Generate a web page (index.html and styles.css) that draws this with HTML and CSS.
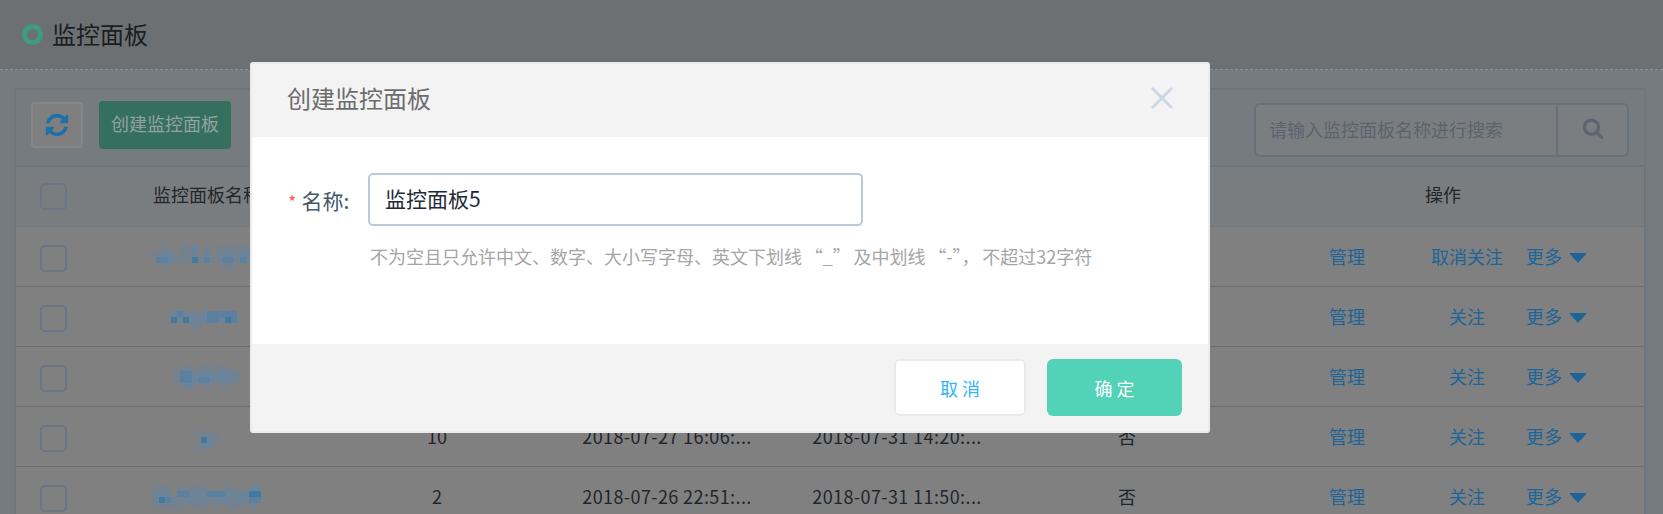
FILE: index.html
```html
<!DOCTYPE html>
<html lang="zh-CN">
<head>
<meta charset="utf-8">
<title>监控面板</title>
<link rel="stylesheet" href="styles.css">
</head>
<body>
<div class="page">
  <header class="topbar">
    <span class="ring"></span>
    <h1 class="page-title">监控面板</h1>
  </header>
  <main class="content">
    <section class="panel">
      <div class="toolbar">
        <button class="refresh" type="button" aria-label="刷新">
          <svg width="26" height="26" viewBox="0 0 1792 1792"><path class="rf" d="M1639 1056q0 5-1 7-64 268-268 434.500t-478 166.500q-146 0-282.500-55t-243.500-157l-129 129q-19 19-45 19t-45-19-19-45v-448q0-26 19-45t45-19h448q26 0 45 19t19 45-19 45l-137 137q71 66 161 102t187 36q134 0 250-65t186-179q11-17 53-117 8-23 30-23h192q13 0 22.500 9.500t9.500 22.500zm25-800v448q0 26-19 45t-45 19h-448q-26 0-45-19t-19-45 19-45l138-138q-148-137-349-137-134 0-250 65t-186 179q-11 17-53 117-8 23-30 23h-199q-13 0-22.500-9.500t-9.500-22.500v-7q65-268 270-434.500t480-166.500q146 0 284 55.500t245 156.500l130-129q19-19 45-19t45 19 19 45z"/></svg>
        </button>
        <button class="create" type="button">创建监控面板</button>
        <div class="search">
          <span class="search-text">请输入监控面板名称进行搜索</span>
          <span class="search-btn">
            <svg width="22" height="22" viewBox="0 0 1792 1792"><path class="sr" d="M1216 832q0-185-131.500-316.500t-316.500-131.500-316.500 131.500-131.500 316.500 131.500 316.500 316.500 131.500 316.500-131.500 131.500-316.500zm512 832q0 52-38 90t-90 38q-54 0-90-38l-343-342q-179 124-399 124-143 0-273.500-55.500t-225-150-150-225-55.500-273.500 55.500-273.500 150-225 225-150 273.500-55.500 273.500 55.500 225 150 150 225 55.500 273.500q0 220-124 399l343 343q37 37 37 90z"/></svg>
          </span>
        </div>
      </div>
      <table class="grid">
        <colgroup><col class="c-check"><col class="c-mid"><col class="c-mid"><col class="c-mid"><col class="c-mid"><col class="c-mid"><col class="c-ops"></colgroup>
        <thead>
          <tr><th><span class="box"></span></th><th>监控面板名称</th><th></th><th></th><th></th><th></th><th>操作</th></tr>
        </thead>
        <tbody>
          <tr>
            <td><span class="box"></span></td>
            <td><svg class="mosaic" width="114" height="24" viewBox="0 0 19 4"><path class="m0" d="M2 0h1v1H2zM5 0h2v2H5zM9 0h1v1H9zM11 0h8v1h-8zM0 1h2v1H0zM11 1h1v1h-1zM14 1h1v1h-1zM18 1h1v2h-1zM4 2h3v1H4zM8 2h1v1H8zM10 2h2v1h-2zM14 2h1v1h-1zM2 3h1v1H2zM12 3h2v1h-2z"/><path class="m1" d="M2 1h2v1H2zM7 0h1v2H7zM9 1h1v1H9zM12 1h2v1h-2zM15 1h3v1h-3zM3 2h1v1H3zM16 2h2v1h-2z"/><path class="m2" d="M1 2h2v1H1zM9 2h1v1H9zM12 2h2v1h-2zM15 2h1v1h-1z"/><path class="m3" d="M7 2h1v1H7z"/></svg></td>
            <td></td><td></td><td></td><td></td>
            <td><div class="ops"><a class="op-main">管理</a><a class="op-follow">取消关注</a><a class="op-more">更多<i class="tri"></i></a></div></td>
          </tr>
          <tr>
            <td><span class="box"></span></td>
            <td><svg class="mosaic" width="72" height="24" viewBox="0 0 12 4"><path class="m0" d="M4 1h1v1H4zM11 2h1v1h-1zM3 3h2v1H3z"/><path class="m1" d="M0 1h1v1H0zM2 1h2v1H2zM5 1h1v1H5zM1 2h1v1H1zM3 2h3v1H3zM8 2h1v1H8z"/><path class="m2" d="M1 1h1v1H1zM6 1h4v1H6zM6 2h2v1H6zM10 2h1v1h-1zM10 1h1v1h-1z"/><path class="m3" d="M0 2h1v1H0zM2 2h1v1H2zM9 2h1v1H9z"/></svg></td>
            <td></td><td></td><td></td><td></td>
            <td><div class="ops"><a class="op-main">管理</a><a class="op-follow">关注</a><a class="op-more">更多<i class="tri"></i></a></div></td>
          </tr>
          <tr>
            <td><span class="box"></span></td>
            <td><svg class="mosaic" width="66" height="24" viewBox="0 0 11 4"><path class="m0" d="M1 0h2v1H1zM4 0h2v1H4zM7 0h2v1H7zM0 1h1v2H0zM10 1h1v2h-1zM1 3h1v1H1zM3 3h1v1H3zM5 3h1v1H5zM8 3h1v1H8z"/><path class="m1" d="M3 1h7v1H3zM3 2h1v1H3zM6 2h4v1H6zM2 3h1v1H2z"/><path class="m2" d="M1 1h2v1H1zM1 2h2v1H1zM4 2h2v1H4z"/></svg></td>
            <td></td><td></td><td></td><td></td>
            <td><div class="ops"><a class="op-main">管理</a><a class="op-follow">关注</a><a class="op-more">更多<i class="tri"></i></a></div></td>
          </tr>
          <tr>
            <td><span class="box"></span></td>
            <td><svg class="mosaic" width="24" height="24" viewBox="0 0 4 4"><path class="m0" d="M0 1h4v1H0zM3 2h1v1H3zM0 3h1v1H0z"/><path class="m1" d="M2 2h1v1H2zM1 3h2v1H1z"/><path class="m3" d="M1 2h1v1H1z"/></svg></td>
            <td>10</td>
            <td class="date">2018-07-27 16:06:...</td>
            <td class="date">2018-07-31 14:20:...</td>
            <td>否</td>
            <td><div class="ops"><a class="op-main">管理</a><a class="op-follow">关注</a><a class="op-more">更多<i class="tri"></i></a></div></td>
          </tr>
          <tr>
            <td><span class="box"></span></td>
            <td><svg class="mosaic" width="108" height="24" viewBox="0 0 18 4"><path class="m0" d="M0 0h3v1H0zM4 0h1v1H4zM6 0h3v1H6zM12 0h2v1h-2zM0 3h5v1H0zM6 3h3v1H6zM10 3h1v1h-1zM12 3h3v1h-3zM16 3h1v1h-1zM4 2h1v1H4zM9 2h1v1H9zM13 2h1v1h-1z"/><path class="m1" d="M16 0h2v1h-2zM0 1h3v1H0zM6 1h3v1H6zM12 1h4v1h-4zM0 2h1v1H0zM3 2h1v1H3zM5 2h4v1H5zM10 2h3v1h-3zM14 2h2v1h-2z"/><path class="m2" d="M4 1h2v1H4zM9 1h3v1H9zM2 2h1v1H2zM16 2h2v1h-2z"/><path class="m3" d="M16 1h2v1h-2zM1 2h1v1H1z"/></svg></td>
            <td>2</td>
            <td class="date">2018-07-26 22:51:...</td>
            <td class="date">2018-07-31 11:50:...</td>
            <td>否</td>
            <td><div class="ops"><a class="op-main">管理</a><a class="op-follow">关注</a><a class="op-more">更多<i class="tri"></i></a></div></td>
          </tr>
        </tbody>
      </table>
    </section>
  </main>
</div>

<div class="modal" role="dialog" aria-label="创建监控面板">
  <div class="modal-head">
    <h2 class="modal-title">创建监控面板</h2>
    <svg class="close" width="24" height="24" viewBox="0 0 24 24"><path d="M2 2l20 20M22 2L2 22" stroke="#cdd8e4" stroke-width="3"/></svg>
  </div>
  <div class="modal-body">
    <div class="field">
      <label class="field-label"><span class="req">*</span>名称:</label>
      <div class="input">监控面板5</div>
    </div>
    <p class="hint">不为空且只允许中文、数字、大小写字母、英文下划线 “_” 及中划线 “-”， 不超过32字符</p>
  </div>
  <div class="modal-foot">
    <button class="btn-cancel" type="button">取消</button>
    <button class="btn-ok" type="button">确定</button>
  </div>
</div>
</body>
</html>
```
FILE: styles.css
```css
* { box-sizing: border-box; }
html, body { margin: 0; height: 100%; overflow: hidden; }
body {
  font-family: "Noto Sans CJK SC", "Noto Sans", sans-serif;
  font-size: 18px;
  color: #22262b;
  background: #757b7f;
}
.page { height: 514px; overflow: hidden; }
.topbar {
  height: 70px;
  background: #6c7073;
  border-bottom: 1px dashed #8a9095;
  display: flex;
  align-items: center;
  padding: 0 0 1px 22px;
  gap: 9px;
}
.ring { width: 21px; height: 21px; border-radius: 50%; border: 5px solid #3f9a82; }
.page-title { margin: 0; font-size: 24px; font-weight: 400; color: #1b1e21; line-height: 34px; }
.content { padding: 18px 17px 0 14px; }
.panel { border: 2px solid #6f767b; border-bottom: 0; background: #757b7f; }
.toolbar { height: 75px; display: flex; align-items: flex-start; padding: 11px 0 0 15px; }
.refresh {
  width: 52px; height: 46px; padding: 0; margin-top: 1px;
  background: #7f7f7f; border: 2px solid #84878a; border-radius: 4px;
  display: flex; align-items: center; justify-content: center;
}
.rf { fill: #1f70aa; }
.sr { fill: #5b6673; }
.create {
  margin-left: 16px; width: 132px; height: 48px; padding: 0 0 4px;
  background: #35705f; border: 0; border-radius: 4px;
  font: inherit; color: #93a29d;
}
.search {
  margin: 2px 15px 0 auto;
  width: 375px; height: 54px;
  display: flex;
  background: #7b7e80; border: 2px solid #68717b; border-radius: 6px;
}
.search-text { flex: 1; padding-left: 13px; line-height: 48px; color: #596470; }
.search-btn { width: 71px; border-left: 2px solid #68717b; display: flex; align-items: center; justify-content: center; padding-bottom: 4px; }
.grid { width: 1628px; border-collapse: separate; border-spacing: 0; table-layout: fixed; background: #808080; }
.c-check { width: 76px; }
.c-mid { width: 230px; }
.c-ops { width: 402px; }
.grid th { height: 62px; background: #7a7d80; font-weight: 400; padding: 0 0 6px; border-top: 2px solid #6f767b; border-bottom: 1px solid #72797e; }
.grid td { height: 60px; padding: 0 0 1px; text-align: center; border-bottom: 1px solid #6e6e6e; }
.grid td.date { letter-spacing: .4px; }
.box { display: block; width: 27px; height: 27px; border: 2px solid #6b7583; border-radius: 5px; margin: 0 25px 0 24px; }
.grid th .box { margin-top: 5px; }
.grid td .box { margin-top: 5px; }
.mosaic { display: block; margin: 2px auto 0; shape-rendering: crispEdges; }
.m0 { fill: #75828d; }
.m1 { fill: #6c8499; }
.m2 { fill: #5c81a0; }
.m3 { fill: #44799f; }
.ops { display: flex; align-items: center; padding-left: 87px; color: #1d6498; }
.op-main { width: 36px; }
.op-follow { width: 72px; margin-left: 66px; text-align: center; }
.op-more { margin-left: 23px; display: flex; align-items: center; gap: 7px; }
.tri { width: 0; height: 0; border-left: 9px solid transparent; border-right: 9px solid transparent; border-top: 10px solid #1d6498; margin-top: 3px; }

.modal {
  position: absolute; left: 250px; top: 62px;
  width: 960px; height: 371px;
  background: #fff;
  border: 2px solid #ececec;
  border-radius: 3px;
  display: flex; flex-direction: column;
}
.modal-head { height: 73px; background: #f3f3f3; display: flex; align-items: center; justify-content: space-between; padding: 0 34px 6px 35px; flex: none; }
.modal-title { margin: 0; font-size: 24px; font-weight: 400; color: #6d6d6d; }
.modal-body { flex: 1; padding: 36px 0 0 36px; }
.field { display: flex; align-items: center; }
.field-label { width: 80px; color: #46566b; font-size: 21px; }
.req { color: #ff5a5a; font-size: 18px; margin-right: 5px; }
.input {
  width: 495px; height: 53px;
  border: 2px solid #bcc9d9; border-radius: 5px;
  padding-left: 15px; line-height: 47px; font-size: 21px; color: #1f2a38;
}
.hint { margin: 15px 0 0 82px; color: #a5a5a5; line-height: 30px; white-space: nowrap; word-spacing: -1.3px; }
.modal-foot { height: 87px; background: #f3f3f3; display: flex; align-items: center; justify-content: flex-end; gap: 21px; padding: 0 26px 0 0; flex: none; }
.btn-cancel, .btn-ok { height: 57px; padding: 0 0 0 4px; font: inherit; border-radius: 6px; letter-spacing: 4px; }
.btn-cancel { width: 132px; background: #fff; border: 2px solid #eaeaea; color: #33b5f5; }
.btn-ok { width: 135px; background: #52d2b6; border: 0; color: #fff; }
```
